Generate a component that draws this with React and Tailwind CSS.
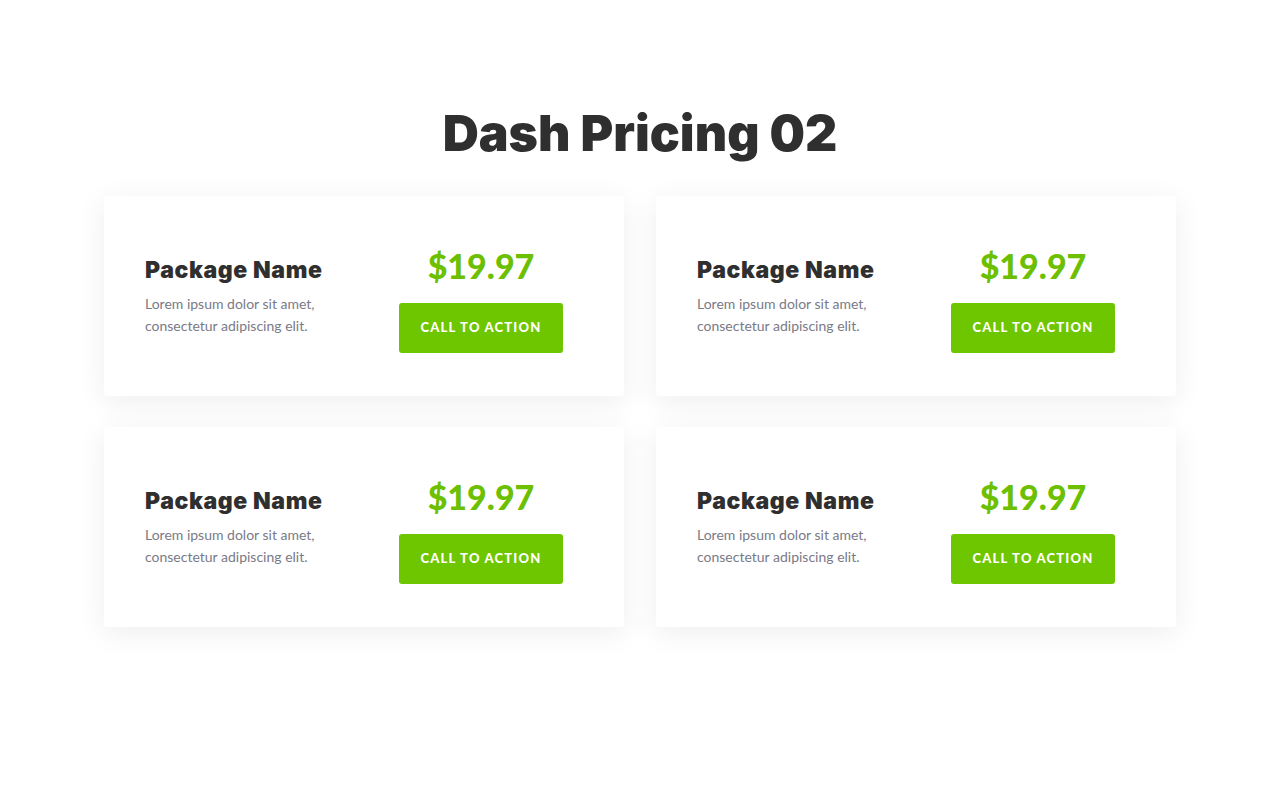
import React from "react";

const cards = [1, 2, 3, 4];

const Card = () => (
  <div className="bg-white h-[200px] rounded-[3px] shadow-[0_6px_30px_rgba(0,0,0,0.07)] flex items-center justify-between pl-[41px] pr-[61px]">
    <div>
      <h3 className="font-['Inter',sans-serif] font-black text-[23px] leading-7 tracking-[0.6px] text-[#2f2f2f]">
        Package Name
      </h3>
      <p className="mt-[9px] font-['Lato',sans-serif] text-[14px] leading-[22px] text-[#7a7a86]">
        Lorem ipsum dolor sit amet,
        <br />
        consectetur adipiscing elit.
      </p>
    </div>
    <div className="flex flex-col items-center pt-[6px]">
      <div className="font-['Lato',sans-serif] font-black text-[34px] leading-10 text-[#6cc000]">
        $19.97
      </div>
      <button className="mt-[17px] w-[164px] h-[50px] rounded-[3px] bg-[#6ec600] text-white font-['Lato',sans-serif] font-black text-[13px] tracking-[1.2px] uppercase">
        Call to Action
      </button>
    </div>
  </div>
);

export default function App() {
  return (
    <div className="min-h-[804px] bg-white flex flex-col items-center">
      <h1 className="mt-[104px] font-['Inter',sans-serif] font-black text-[50px] leading-[58px] tracking-[0px] text-[#2f2f2f]">
        Dash Pricing 02
      </h1>
      <div className="mt-[34px] grid grid-cols-2 gap-x-8 gap-y-[31px] w-[1072px]">
        {cards.map((c) => (
          <Card key={c} />
        ))}
      </div>
    </div>
  );
}
